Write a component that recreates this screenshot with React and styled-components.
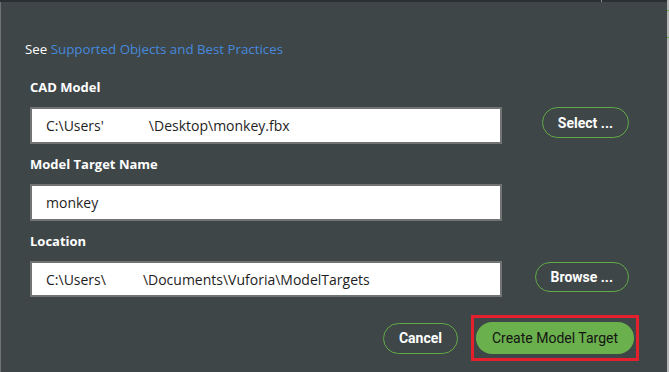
import React from "react";
import styled, { createGlobalStyle } from "styled-components";

const GlobalStyle = createGlobalStyle`
  html, body {
    margin: 0;
    padding: 0;
    background: #3e4648;
  }
  #root {
    width: 669px;
    height: 372px;
    overflow: hidden;
  }
`;

const Frame = styled.div`
  display: flex;
  width: 669px;
  height: 372px;
`;

const Main = styled.div`
  flex: 1;
  display: flex;
  flex-direction: column;
`;

const TopBar = styled.div`
  height: 2px;
  background: #2a2f33;
  display: flex;
`;

const TopTick = styled.span`
  width: 1px;
  height: 2px;
  margin-left: 601px;
  background: #8a8f93;
`;

const Scroll = styled.div`
  width: 2px;
  background: #b6b8b8;
  display: flex;
  flex-direction: column;
`;

const ScrollTick = styled.span`
  height: 1px;
  margin-top: ${(p) => p.$top}px;
  background: #6ab04c;
`;

const Panel = styled.div`
  flex: 1;
  display: flex;
  flex-direction: column;
  border-left: 1px solid #6d7375;
  padding: 39px 28px 0 24px;
  font-family: "Open Sans", "Noto Sans", sans-serif;
`;

const Intro = styled.p`
  margin: 0 0 22px;
  font-size: 13.3px;
  line-height: 16px;
  color: #ffffff;
`;

const Link = styled.a`
  color: #4689dc;
  text-decoration: none;
`;

const Form = styled.div`
  display: flex;
  flex-direction: column;
  gap: 12px;
  padding-left: 5px;
`;

const Field = styled.div`
  display: flex;
  flex-direction: column;
  gap: 12px;
`;

const Label = styled.label`
  font-size: 13px;
  line-height: 16px;
  font-weight: 700;
  color: #ffffff;
`;

const Row = styled.div`
  display: grid;
  grid-template-columns: 472px 1fr;
  align-items: start;
  padding-right: 10px;
`;

const TextBox = styled.div`
  box-sizing: border-box;
  width: 472px;
  height: ${(p) => p.$h || 37}px;
  display: flex;
  align-items: center;
  padding-left: 14px;
  background: #ffffff;
  border: 2px solid #727474;
  font-size: 14px;
  color: #1e1e1e;
  white-space: pre;
`;

const Hidden = styled.span`
  display: inline-block;
  width: ${(p) => p.$w}px;
`;

const OutlineButton = styled.button`
  justify-self: end;
  box-sizing: border-box;
  height: ${(p) => p.$h || 31}px;
  padding: 0 ${(p) => p.$px || 15}px;
  margin-top: ${(p) => p.$mt || 0}px;
  border: 1.6px solid #62a947;
  border-radius: 999px;
  background: transparent;
  color: #ffffff;
  font-family: Roboto, "Liberation Sans", sans-serif;
  font-size: 14px;
  font-weight: 700;
`;

const Actions = styled.div`
  display: flex;
  justify-content: flex-end;
  align-items: center;
  gap: 13px;
  margin-top: 18px;
`;

const Highlight = styled.div`
  display: flex;
  padding: 4px 2px;
  border: 3px solid #e3202b;
`;

const PrimaryButton = styled.button`
  box-sizing: border-box;
  height: 32px;
  width: 158px;
  border: none;
  border-radius: 999px;
  background: #6ab04c;
  color: #141414;
  font-family: Roboto, "Liberation Sans", sans-serif;
  font-size: 14px;
  font-weight: 400;
`;

export default function App() {
  return (
    <>
      <GlobalStyle />
      <Frame>
        <Main>
          <TopBar>
            <TopTick />
          </TopBar>
          <Panel>
            <Intro>
              See <Link href="#">Supported Objects and Best Practices</Link>
            </Intro>
            <Form>
              <Field>
                <Label>CAD Model</Label>
                <Row>
                  <TextBox>
                    C:\Users'<Hidden $w={45} />\Desktop\monkey.fbx
                  </TextBox>
                  <OutlineButton $px={15}>Select ...</OutlineButton>
                </Row>
              </Field>
              <Field>
                <Label>Model Target Name</Label>
                <Row>
                  <TextBox>monkey</TextBox>
                </Row>
              </Field>
              <Field>
                <Label>Location</Label>
                <Row>
                  <TextBox $h={36}>
                    C:\Users\<Hidden $w={37} />\Documents\Vuforia\ModelTargets
                  </TextBox>
                  <OutlineButton $h={30} $px={15} $mt={1}>
                    Browse ...
                  </OutlineButton>
                </Row>
              </Field>
            </Form>
            <Actions>
              <OutlineButton $h={31} $px={15}>
                Cancel
              </OutlineButton>
              <Highlight>
                <PrimaryButton>Create Model Target</PrimaryButton>
              </Highlight>
            </Actions>
          </Panel>
        </Main>
        <Scroll>
          <ScrollTick $top={10} />
          <ScrollTick $top={26} />
        </Scroll>
      </Frame>
    </>
  );
}
